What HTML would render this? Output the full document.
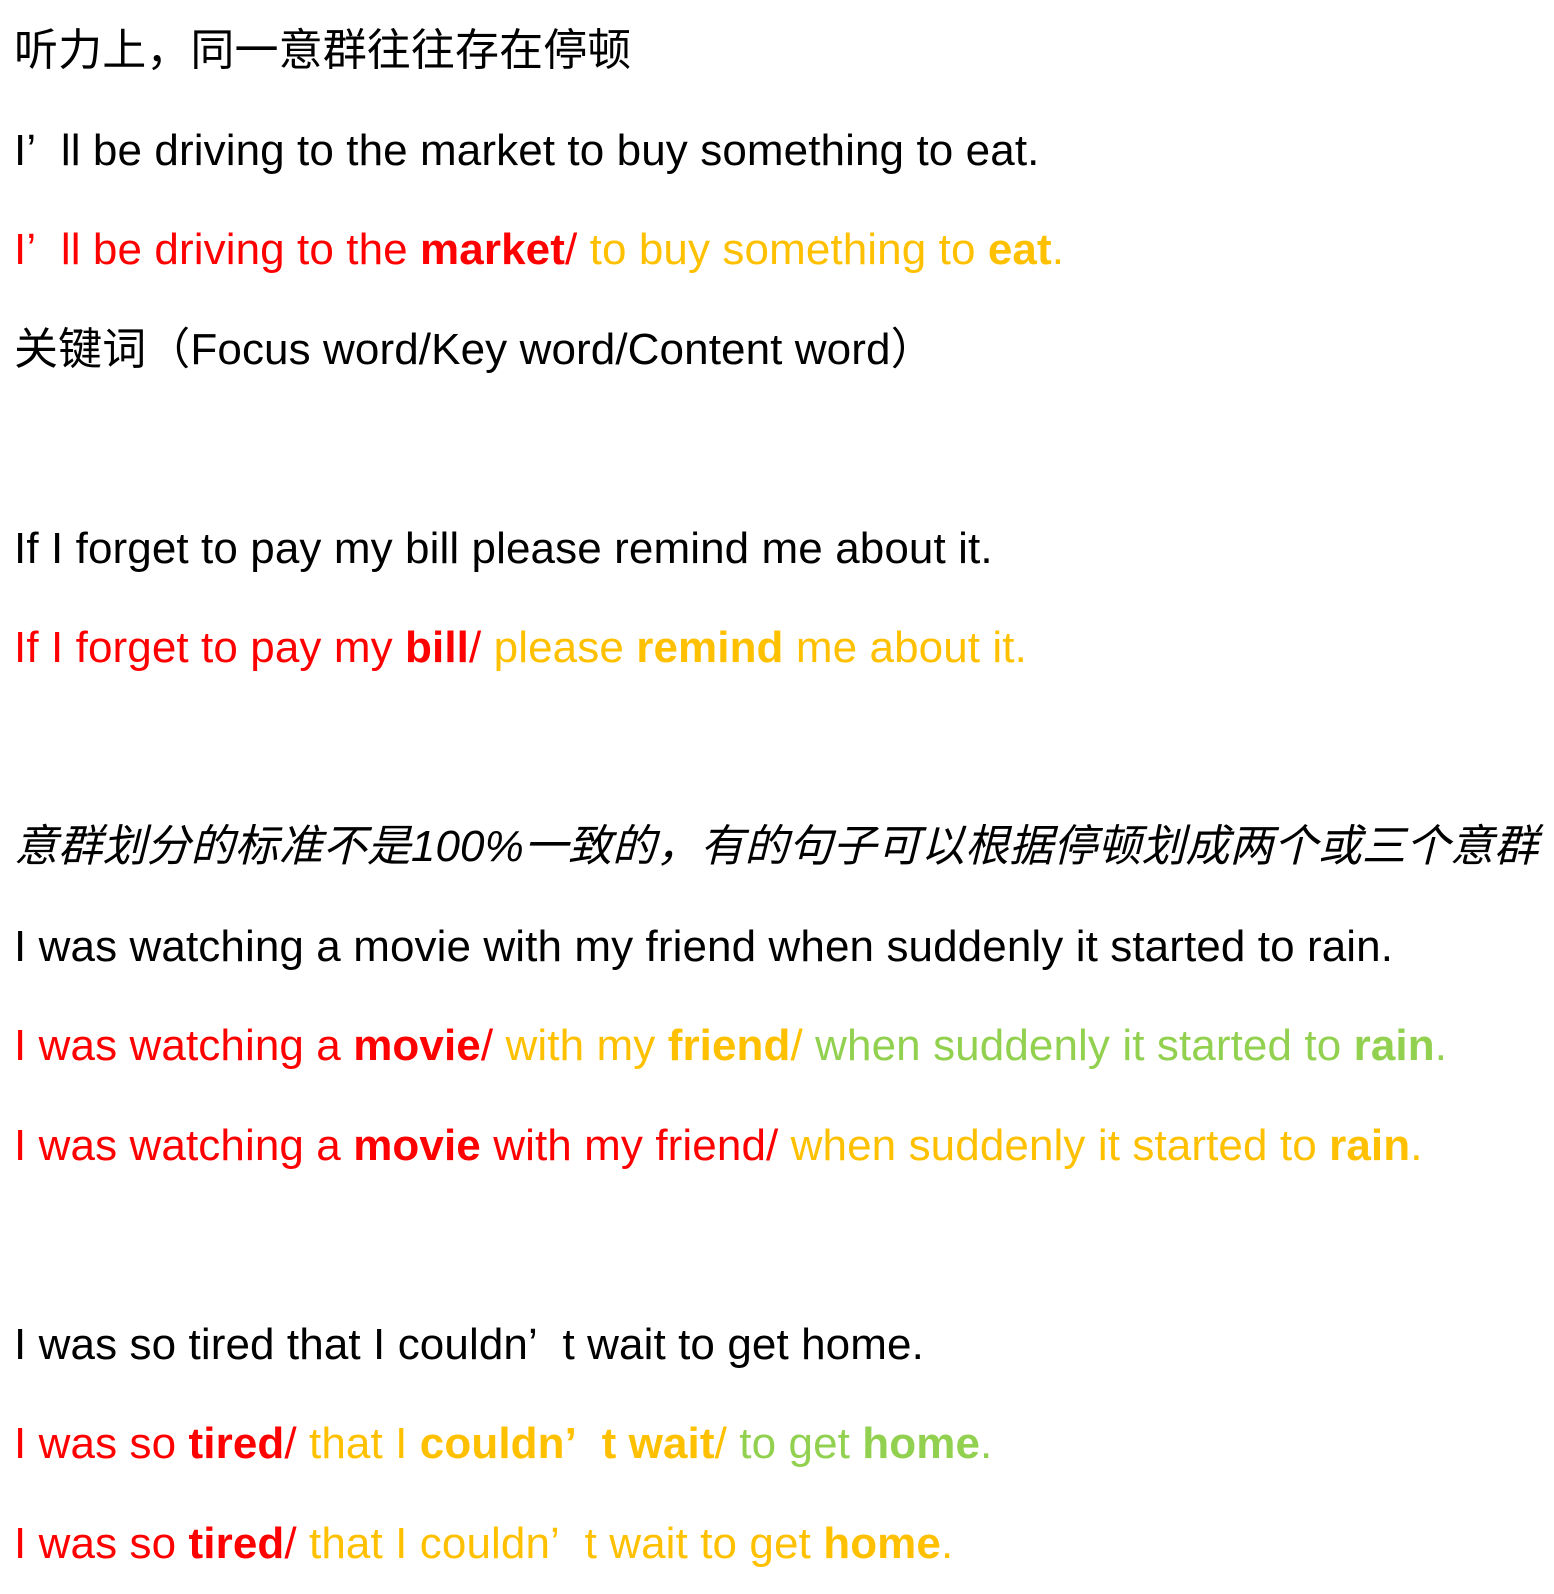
<!DOCTYPE html>
<html><head><meta charset="utf-8"><style>
body{margin:0;background:#fff;width:1554px;height:1592px;overflow:hidden}
.w{padding:2px 0 0 14px;font-family:"Liberation Sans","Noto Sans CJK SC",sans-serif;font-size:44px;color:#000;white-space:nowrap;letter-spacing:0.1px}
p{margin:0;height:99.5px;line-height:98px;overflow:hidden}
.r{color:#ff0000}.o{color:#ffc000}.g{color:#92d050}
b{font-weight:bold}
</style></head><body><div class="w">
<p>听力上，同一意群往往存在停顿</p>
<p>I’&nbsp;&nbsp;ll be driving to the market to buy something to eat.</p>
<p><span class="r">I’&nbsp;&nbsp;ll be driving to the <b>market</b>/</span><span class="o"> to buy something to <b>eat</b>.</span></p>
<p>关键词（Focus word/Key word/Content word）</p>
<p></p>
<p>If I forget to pay my bill please remind me about it.</p>
<p><span class="r">If I forget to pay my <b>bill</b>/</span><span class="o"> please <b>remind</b> me about it.</span></p>
<p></p>
<p><i>意群划分的标准不是100%一致的，有的句子可以根据停顿划成两个或三个意群</i></p>
<p>I was watching a movie with my friend when suddenly it started to rain.</p>
<p><span class="r">I was watching a <b>movie</b>/</span><span class="o"> with my <b>friend</b>/</span><span class="g"> when suddenly it started to <b>rain</b>.</span></p>
<p><span class="r">I was watching a <b>movie</b> with my friend/</span><span class="o"> when suddenly it started to <b>rain</b>.</span></p>
<p></p>
<p>I was so tired that I couldn’&nbsp;&nbsp;t wait to get home.</p>
<p><span class="r">I was so <b>tired</b>/</span><span class="o"> that I <b>couldn’&nbsp;&nbsp;t wait</b>/</span><span class="g"> to get <b>home</b>.</span></p>
<p><span class="r">I was so <b>tired</b>/</span><span class="o"> that I couldn’&nbsp;&nbsp;t wait to get <b>home</b>.</span></p>
</div></body></html>
